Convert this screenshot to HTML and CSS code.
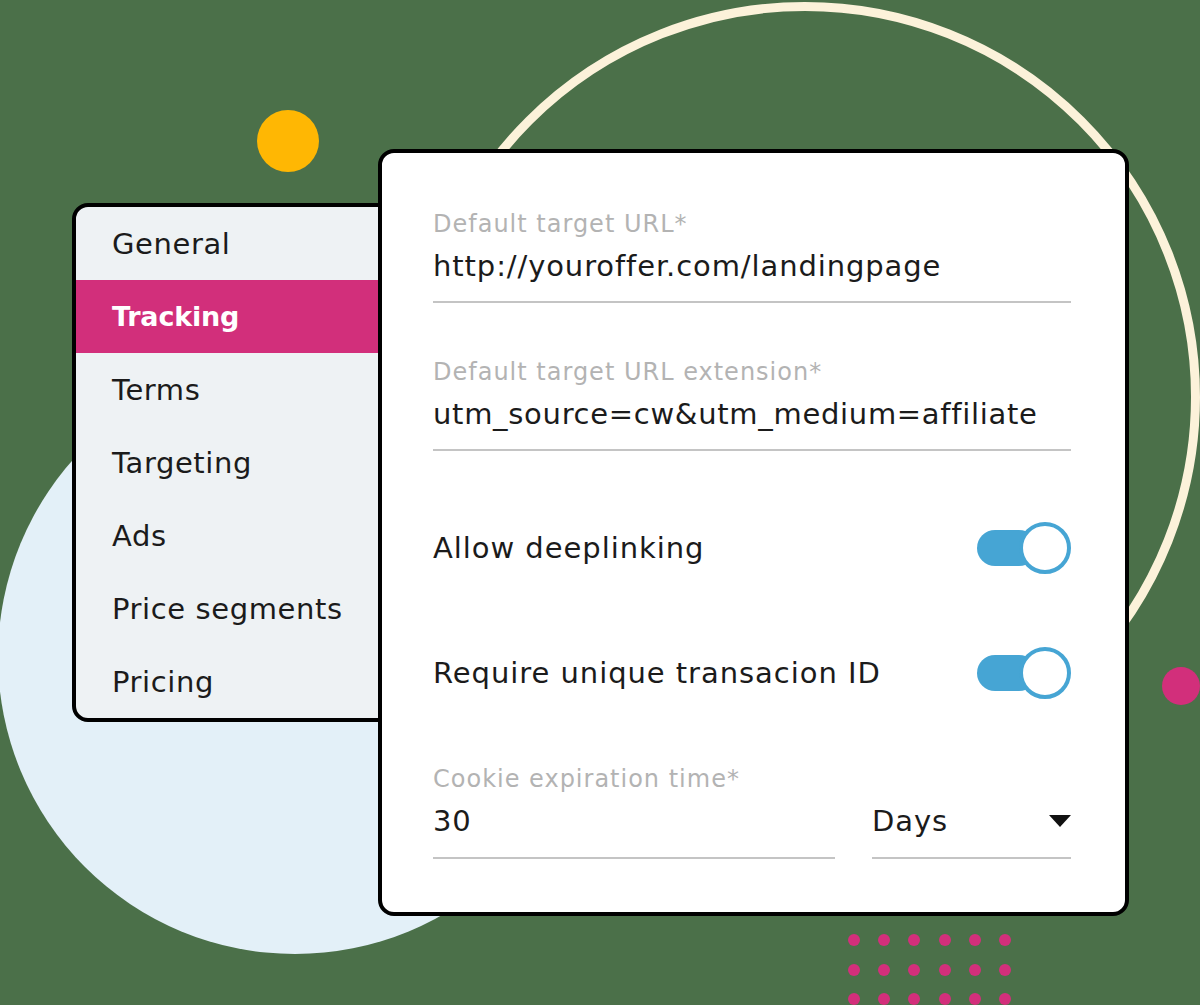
FILE: index.html
```html
<!DOCTYPE html>
<html lang="en">
<head>
<meta charset="utf-8">
<title>Tracking settings</title>
<link rel="stylesheet" href="styles.css">
</head>
<body>
<div class="stage">
  <div class="deco ring"></div>
  <div class="deco blue-disc"></div>
  <div class="deco sun"></div>
  <div class="deco pink-dot"></div>
  <div class="deco dot-grid">
    <span></span><span></span><span></span><span></span><span></span><span></span>
    <span></span><span></span><span></span><span></span><span></span><span></span>
    <span></span><span></span><span></span><span></span><span></span><span></span>
  </div>

  <nav class="menu">
    <div class="menu-item">General</div>
    <div class="menu-item active">Tracking</div>
    <div class="menu-item">Terms</div>
    <div class="menu-item">Targeting</div>
    <div class="menu-item">Ads</div>
    <div class="menu-item">Price segments</div>
    <div class="menu-item">Pricing</div>
  </nav>

  <section class="panel">
    <div class="field field-1">
      <div class="label">Default target URL*</div>
      <div class="value">http://youroffer.com/landingpage</div>
    </div>
    <div class="field field-2">
      <div class="label">Default target URL extension*</div>
      <div class="value">utm_source=cw&amp;utm_medium=affiliate</div>
    </div>
    <div class="toggle-row row-1">
      <span class="toggle-text">Allow deeplinking</span>
      <span class="toggle"><span class="knob"></span></span>
    </div>
    <div class="toggle-row row-2">
      <span class="toggle-text">Require unique transacion ID</span>
      <span class="toggle"><span class="knob"></span></span>
    </div>
    <div class="cookie">
      <div class="label">Cookie expiration time*</div>
      <div class="cookie-inputs">
        <div class="value number">30</div>
        <div class="value select">Days<span class="caret"></span></div>
      </div>
    </div>
  </section>
</div>
</body>
</html>
```

FILE: styles.css
```css
html, body {
  margin: 0;
  padding: 0;
}
body {
  background: #4b7049;
  font-family: "DejaVu Sans", "Open Sans", "Liberation Sans", sans-serif;
  color: #1b1b1b;
}
.stage {
  position: relative;
  width: 1200px;
  height: 1005px;
  overflow: hidden;
}
.deco {
  position: absolute;
  border-radius: 50%;
  box-sizing: border-box;
}
.ring {
  left: 410px;
  top: 2px;
  width: 790px;
  height: 790px;
  border: 9px solid #fcf2da;
}
.blue-disc {
  left: -2px;
  top: 360px;
  width: 594px;
  height: 594px;
  background: #e3f0f8;
}
.sun {
  left: 257px;
  top: 110px;
  width: 62px;
  height: 62px;
  background: #ffb703;
}
.pink-dot {
  left: 1162px;
  top: 667px;
  width: 38px;
  height: 38px;
  background: #d22f7b;
}
.dot-grid {
  left: 848px;
  top: 934px;
  border-radius: 0;
  display: grid;
  grid-template-columns: repeat(6, 12px);
  column-gap: 18.2px;
  row-gap: 17.5px;
}
.dot-grid span {
  width: 12px;
  height: 12px;
  border-radius: 50%;
  background: #d22f7b;
}

/* side menu */
.menu {
  position: absolute;
  left: 72px;
  top: 203px;
  width: 340px;
  height: 519px;
  box-sizing: border-box;
  border: 4px solid #000;
  border-radius: 16px;
  background: #eef2f4;
  overflow: hidden;
  display: flex;
  flex-direction: column;
}
.menu-item {
  height: 73px;
  flex: none;
  display: flex;
  align-items: center;
  padding-left: 36px;
  font-size: 29px;
  color: #1b1b1b;
  letter-spacing: 0.6px;
}
.menu-item.active {
  background: #d22f7b;
  color: #fff;
  font-weight: 700;
  font-size: 27px;
  letter-spacing: -0.2px;
}

/* main panel */
.panel {
  position: absolute;
  left: 378px;
  top: 149px;
  width: 751px;
  height: 767px;
  box-sizing: border-box;
  border: 4px solid #000;
  border-radius: 16px;
  background: #fff;
  padding: 0 54px 0 51px;
  display: flex;
  flex-direction: column;
}
.label {
  font-size: 24px;
  line-height: 30px;
  color: #b3b3b3;
  letter-spacing: 1px;
}
.value {
  font-size: 29px;
  line-height: 40px;
  color: #1b1b1b;
  letter-spacing: 0.9px;
}
.field {
  border-bottom: 2px solid #c4c4c4;
  padding-bottom: 15px;
}
.field .value {
  margin-top: 7px;
}
.field-1 {
  margin-top: 56px;
}
.field-2 {
  margin-top: 54px;
}
.field-2 .value {
  letter-spacing: 0.7px;
}
.toggle-row {
  display: flex;
  align-items: center;
  justify-content: space-between;
  height: 52px;
}
.row-1 {
  margin-top: 71px;
}
.row-2 {
  margin-top: 73px;
}
.toggle-text {
  font-size: 29px;
  letter-spacing: 0.95px;
}
.toggle {
  position: relative;
  width: 94px;
  height: 52px;
  flex: none;
}
.toggle::before {
  content: "";
  position: absolute;
  left: 0;
  top: 8px;
  width: 60px;
  height: 36px;
  border-radius: 18px;
  background: #46a5d4;
}
.knob {
  position: absolute;
  right: 0;
  top: 0;
  width: 52px;
  height: 52px;
  box-sizing: border-box;
  border-radius: 50%;
  border: 4px solid #46a5d4;
  background: #fff;
}
.cookie {
  margin-top: 65px;
}
.cookie-inputs {
  display: flex;
  gap: 37px;
  margin-top: 7px;
}
.cookie-inputs .value {
  border-bottom: 2px solid #c4c4c4;
  padding-bottom: 16px;
}
.number {
  width: 402px;
}
.select {
  flex: 1;
  display: flex;
  align-items: center;
  justify-content: space-between;
}
.caret {
  width: 0;
  height: 0;
  border-left: 11px solid transparent;
  border-right: 11px solid transparent;
  border-top: 12px solid #111;
}
```
